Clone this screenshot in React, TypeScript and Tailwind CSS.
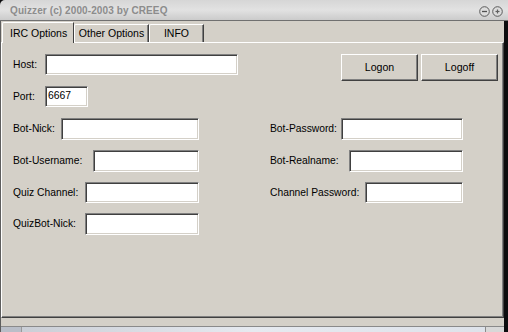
import React from "react";

const font = "font-['Liberation_Sans',Arial,sans-serif]";

function Field({ cls, value }: { cls: string; value?: string }) {
  return (
    <div
      className={`${cls} bg-white border border-t-[#808080] border-l-[#808080] border-b-white border-r-white shadow-[inset_1px_1px_0_#404040,inset_-1px_-1px_0_#d4d0c8] flex items-center pl-[2px] text-[10.4px] text-black leading-none`}
    >
      {value}
    </div>
  );
}

function Button({ label }: { label: string }) {
  return (
    <div className="w-[77px] h-[27px] border border-t-white border-l-white border-b-[#404040] border-r-[#404040] shadow-[inset_-1px_-1px_0_#808080] flex items-center justify-center text-[10.6px] text-black">
      {label}
    </div>
  );
}

export default function App() {
  return (
    <div className={`w-[508px] h-[332px] bg-[#0c0c0e] flex flex-col overflow-hidden ${font}`}>
      {/* Title bar */}
      <div className="h-[21px] shrink-0 rounded-tl-[5px] border-b border-[#707070] bg-gradient-to-b from-[#d6d6d6] via-[#e2e2e2] to-[#cbcbcb] flex items-center pl-[10px] pr-[5px]">
        <span className="text-[10px] font-bold text-[#8c8c8c] tracking-[0.1px]">
          Quizzer (c) 2000-2003 by CREEQ
        </span>
        <div className="ml-auto flex items-center gap-[2px] pt-[2px]">
          <svg width="11" height="11" viewBox="0 0 11 11">
            <circle cx="5.5" cy="5.5" r="4.8" fill="#dcdcdc" stroke="#5a5a5a" strokeWidth="1" />
            <line x1="3" y1="5.5" x2="8" y2="5.5" stroke="#505050" strokeWidth="1.3" />
          </svg>
          <svg width="11" height="11" viewBox="0 0 11 11">
            <circle cx="5.5" cy="5.5" r="4.8" fill="#dcdcdc" stroke="#5a5a5a" strokeWidth="1" />
            <line x1="3.5" y1="5.5" x2="7.5" y2="5.5" stroke="#606060" strokeWidth="1.2" />
            <line x1="5.5" y1="3.5" x2="5.5" y2="7.5" stroke="#606060" strokeWidth="1.2" />
          </svg>
        </div>
      </div>

      <div className="flex flex-1">
        <div className="w-[504px] bg-[#d4d0c8] border-l border-[#5e5e5e] flex flex-col">
          {/* Tabs */}
          <div className="h-[21px] flex items-end pl-[1px] text-[10.5px] text-black">
            <div className="relative z-10 -mb-px w-[72px] h-[21px] bg-[#d4d0c8] border-t border-l border-white border-r border-r-[#404040] rounded-tl-[2px] flex items-start pt-[3px] pl-[7px]">
              IRC Options
            </div>
            <div className="w-[75px] h-[18px] border-t border-l border-white border-r border-r-[#404040] shadow-[inset_-1px_0_0_#808080] rounded-tl-[2px] flex items-center justify-center">
              Other Options
            </div>
            <div className="w-[55px] h-[18px] border-t border-l border-white border-r border-r-[#404040] shadow-[inset_-1px_0_0_#808080] rounded-tl-[2px] flex items-center justify-center">
              INFO
            </div>
          </div>

          {/* Panel */}
          <div className="h-[276px] border border-t-white border-l-white border-r-[#404040] border-b-[#404040] shadow-[inset_-1px_-1px_0_#808080] pt-[11px] pl-[11px] text-[10.3px] text-black flex flex-col">
            {/* Row 1 */}
            <div className="flex h-[27px] items-start">
              <div className="w-[257px] flex items-center h-[21px]">
                <span className="w-[32px]">Host:</span>
                <Field cls="w-[193px] h-[21px]" />
              </div>
              <div className="w-[71px]" />
              <div className="flex gap-[3px]">
                <Button label="Logon" />
                <Button label="Logoff" />
              </div>
            </div>
            {/* Row 2 */}
            <div className="flex h-[21px] items-center mt-[5px]">
              <span className="w-[32px]">Port:</span>
              <Field cls="w-[43px] h-[21px]" value="6667" />
            </div>
            {/* Row 3 */}
            <div className="flex h-[22px] items-center mt-[11px]">
              <div className="w-[257px] flex items-center">
                <span className="w-[48px]">Bot-Nick:</span>
                <Field cls="w-[138px] h-[22px]" />
              </div>
              <span className="w-[71px]">Bot-Password:</span>
              <Field cls="w-[122px] h-[22px]" />
            </div>
            {/* Row 4 */}
            <div className="flex h-[22px] items-center mt-[10px]">
              <div className="w-[257px] flex items-center">
                <span className="w-[80px]">Bot-Username:</span>
                <Field cls="w-[106px] h-[22px]" />
              </div>
              <span className="w-[79px]">Bot-Realname:</span>
              <Field cls="w-[114px] h-[22px]" />
            </div>
            {/* Row 5 */}
            <div className="flex h-[21px] items-center mt-[10px]">
              <div className="w-[257px] flex items-center">
                <span className="w-[72px]">Quiz Channel:</span>
                <Field cls="w-[114px] h-[21px]" />
              </div>
              <span className="w-[95px]">Channel Password:</span>
              <Field cls="w-[98px] h-[21px]" />
            </div>
            {/* Row 6 */}
            <div className="flex h-[22px] items-center mt-[10px]">
              <span className="w-[72px]">QuizBot-Nick:</span>
              <Field cls="w-[114px] h-[22px]" />
            </div>
          </div>

          <div className="h-[8px]" />
          {/* Status strip */}
          <div className="h-[6px] border-t border-[#8a8a8a] bg-gradient-to-r from-[#c8ccd4] via-[#e6eaf0] to-[#dde2ea] flex">
            <div className="w-[21px] border-r border-[#9a9a9a] bg-[#b9bec8]" />
            <div className="flex-1" />
            <div className="w-[19px] border-l border-[#8a8a8a] bg-[#d8d8d8]" />
          </div>
        </div>
        <div className="flex-1 bg-[#0c0c0e]" />
      </div>
    </div>
  );
}
